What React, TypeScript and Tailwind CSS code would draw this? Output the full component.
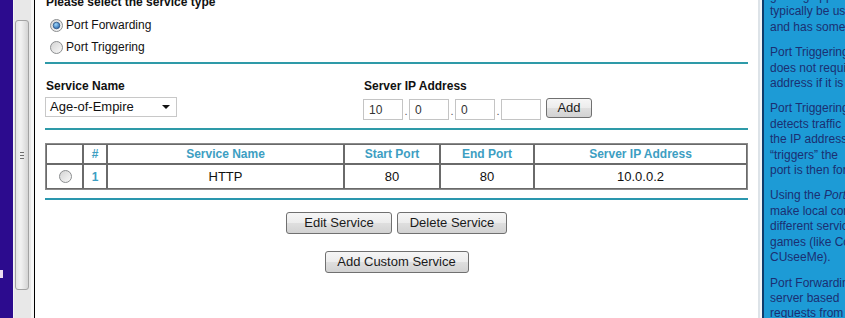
import React from "react";

function Radio({ checked = false }: { checked?: boolean }) {
  return (
    <svg width="13" height="13" viewBox="0 0 13 13" className="shrink-0">
      <defs>
        <linearGradient id="radioFill" x1="0" y1="0" x2="1" y2="1">
          <stop offset="0" stopColor="#d2d2d2" />
          <stop offset="1" stopColor="#fafafa" />
        </linearGradient>
        <radialGradient id="radioDot" cx="0.4" cy="0.35" r="0.75">
          <stop offset="0" stopColor="#9dd6fa" />
          <stop offset="1" stopColor="#1d5aa4" />
        </radialGradient>
      </defs>
      <circle cx="6.5" cy="6.5" r="6" fill="url(#radioFill)" stroke="#8c8e90" />
      {checked && <circle cx="6.5" cy="6.5" r="3.3" fill="url(#radioDot)" stroke="#22497a" strokeWidth="0.7" />}
    </svg>
  );
}

function Button({ children, className = "" }: { children: React.ReactNode; className?: string }) {
  return (
    <div
      className={`flex items-center justify-center rounded-[3px] border border-[#707070] bg-[linear-gradient(#f6f6f6,#ececec_50%,#dfdfdf_50%,#d2d2d2)] text-[13px] text-[#1a1a1a] ${className}`}
    >
      {children}
    </div>
  );
}

function IpBox({ value }: { value: string }) {
  return (
    <div className="flex h-[21px] w-[40px] items-center border border-[#c4c4c4] bg-white pl-[5px] text-[12px] text-[#333]">
      {value}
    </div>
  );
}

function Dot() {
  return <div className="flex h-[21px] w-[6px] items-end justify-center pb-[3px] text-[11px] leading-none text-[#555]">.</div>;
}

const help: React.ReactNode[][] = [
  ["gaming applications. It would", "typically be used for", "and has some limitations."],
  ["Port Triggering", "does not require", "address if it is"],
  ["Port Triggering", "detects traffic", "the IP address", "\u201Ctriggers\u201D the", "port is then forwarded"],
  [
    <>
      Using the <i>Port</i>
    </>,
    "make local computers",
    "different services",
    "games (like Counter",
    "CUseeMe).",
  ],
  ["Port Forwarding", "server based", "requests from"],
];

export default function App() {
  return (
    <div className="flex h-[318px] w-[845px] overflow-hidden bg-white font-['Liberation_Sans',Arial,sans-serif]">
      {/* left frame */}
      <div className="w-[13px] shrink-0 bg-[#2c0b8e]">
        <div className="mt-[270px] h-[8px] w-[3px] bg-[#ecdcf2]" />
      </div>
      <div className="w-[18px] shrink-0 border-l border-[#f4f4f4] bg-[#e8e8e8] pt-[20px] pl-[1px]">
        <div className="flex h-[270px] w-[14px] items-center justify-center rounded-[3px] border border-[#a3a3a3] bg-[linear-gradient(to_right,#e4e4e4,#f2f2f2_40%,#d4d4d4)]">
          <div className="flex flex-col gap-[2px]">
            <div className="h-[1px] w-[4px] bg-[#6f6f6f]" />
            <div className="h-[1px] w-[4px] bg-[#6f6f6f]" />
            <div className="h-[1px] w-[4px] bg-[#6f6f6f]" />
          </div>
        </div>
      </div>
      <div className="w-[3px] shrink-0 bg-[#f7f7f7]" />
      <div className="w-[1px] shrink-0 bg-black" />

      {/* main content */}
      <div className="w-[723px] shrink-0 px-[10px] text-[#111]">
        <div className="-mt-[5px] h-[15px] pl-[1px] text-[12px] font-bold leading-[15px]">Please select the service type</div>
        <div className="mt-[4px] flex h-[22px] items-center pl-[5px] text-[12px]">
          <Radio checked />
          <span className="ml-[3px]">Port Forwarding</span>
        </div>
        <div className="flex h-[22px] items-center pl-[5px] text-[12px]">
          <Radio />
          <span className="ml-[3px]">Port Triggering</span>
        </div>
        <div className="mt-[4px] h-[2px] bg-[#2e9aa8]" />

        <div className="mt-[15px] flex">
          <div className="w-[318px]">
            <div className="h-[15px] pl-[1px] text-[12px] font-bold leading-[15px]">Service Name</div>
            <div className="mt-[3px] flex h-[20px] w-[132px] items-center justify-between border border-[#c8c8c8] bg-white pl-[4px] pr-[6px] text-[13px]">
              <span>Age-of-Empire</span>
              <svg width="8" height="4" viewBox="0 0 8 4">
                <path d="M0 0H8L4 4Z" fill="#111" />
              </svg>
            </div>
          </div>
          <div>
            <div className="h-[15px] pl-[1px] text-[12px] font-bold leading-[15px]">Server IP Address</div>
            <div className="mt-[5px] flex items-start">
              <IpBox value="10" />
              <Dot />
              <IpBox value="0" />
              <Dot />
              <IpBox value="0" />
              <Dot />
              <IpBox value="" />
              <Button className="ml-[5px] -mt-[1px] h-[20px] w-[46px]">Add</Button>
            </div>
          </div>
        </div>
        <div className="mt-[8px] h-[2px] bg-[#2e9aa8]" />

        <table className="mt-[13px] w-full table-fixed border-separate border-spacing-0 border border-[#8a8a8a] text-[12px]">
          <colgroup>
            <col className="w-[37px]" />
            <col className="w-[24px]" />
            <col className="w-[237px]" />
            <col className="w-[96px]" />
            <col className="w-[94px]" />
            <col />
          </colgroup>
          <thead>
            <tr className="h-[20px] font-bold text-[#3d9ec2]">
              <th className="border border-[#6a6a6a] p-0"></th>
              <th className="border border-[#6a6a6a] p-0">#</th>
              <th className="border border-[#6a6a6a] p-0">Service Name</th>
              <th className="border border-[#6a6a6a] p-0">Start Port</th>
              <th className="border border-[#6a6a6a] p-0">End Port</th>
              <th className="border border-[#6a6a6a] p-0">Server IP Address</th>
            </tr>
          </thead>
          <tbody>
            <tr className="h-[25px] text-center">
              <td className="border border-[#6a6a6a] p-0">
                <div className="flex justify-center pl-[1px]">
                  <Radio />
                </div>
              </td>
              <td className="border border-[#6a6a6a] p-0 font-bold text-[#3d9ec2]">1</td>
              <td className="border border-[#6a6a6a] p-0 text-[13px]">HTTP</td>
              <td className="border border-[#6a6a6a] p-0 text-[13px]">80</td>
              <td className="border border-[#6a6a6a] p-0 text-[13px]">80</td>
              <td className="border border-[#6a6a6a] p-0 text-[13px]">10.0.0.2</td>
            </tr>
          </tbody>
        </table>
        <div className="mt-[8px] h-[2px] bg-[#2a97ae]" />

        <div className="mt-[12px] flex justify-center gap-[5px]">
          <Button className="h-[22px] w-[106px]">Edit Service</Button>
          <Button className="h-[22px] w-[110px]">Delete Service</Button>
        </div>
        <div className="mt-[17px] flex justify-center">
          <Button className="h-[22px] w-[144px]">Add Custom Service</Button>
        </div>
      </div>

      {/* right help frame */}
      <div className="w-[2px] shrink-0 bg-[#dde3e8]" />
      <div className="w-[2px] shrink-0 bg-[#f4f6f8]" />
      <div className="w-[83px] shrink-0 overflow-hidden border-l-2 border-[#0f3c6c] bg-[#1d9bd6] pl-[6px] text-[12px] leading-[15.4px] text-[#1b2f72]">
        <div className="-mt-[11px]">
          {help.map((para, i) => (
            <div key={i} className="mb-[10px]">
              {para.map((line, j) => (
                <div key={j} className="whitespace-nowrap">
                  {line}
                </div>
              ))}
            </div>
          ))}
        </div>
      </div>
    </div>
  );
}
